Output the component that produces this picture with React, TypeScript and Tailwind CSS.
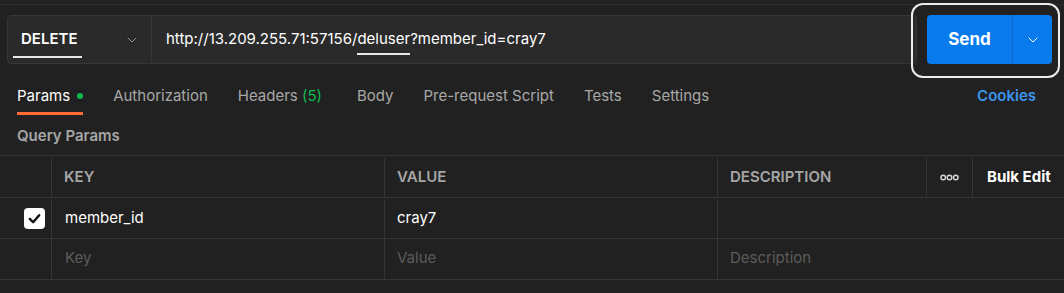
import React from 'react';
import { ChevronDown } from 'lucide-react';

const tabs = [
  { label: 'Params', active: true, dot: true },
  { label: 'Authorization' },
  { label: 'Headers', count: '(5)' },
  { label: 'Body' },
  { label: 'Pre-request Script' },
  { label: 'Tests' },
  { label: 'Settings' },
];

const RequestBar: React.FC = () => (
  <div className="flex items-center pt-[10px] pl-[7px] pr-[12px]">
    <div className="flex h-[49px] flex-1 rounded-[4px] border border-[#363636] bg-[#2a2a2a]">
      <div className="relative flex w-[144px] items-center border-r border-[#363636] pl-[13px]">
        <span className="text-[15px] font-semibold text-white">DELETE</span>
        <ChevronDown className="ml-auto mr-[11px] h-4 w-4 text-[#8f8f8f]" strokeWidth={1.5} />
        <div className="absolute bottom-[5px] left-[5px] h-[2px] w-[69px] bg-[#e6e6e6]" />
      </div>
      <div className="flex items-center pl-[14px] text-[15px] text-white">
        <span>http://13.209.255.71:57156/</span>
        <span className="relative">
          deluser
          <span className="absolute -bottom-[4px] left-0 h-[2px] w-full bg-[#e6e6e6]" />
        </span>
        <span>?member_id=cray7</span>
      </div>
    </div>
    <div className="relative ml-[10px]">
      <div className="pointer-events-none absolute -left-[16px] -right-[8px] -top-[12px] -bottom-[14px] rounded-[12px] border-2 border-[#ececec]" />
      <div className="flex h-[49px] w-[125px] overflow-hidden rounded-[4px] bg-[#097bed]">
        <div className="flex w-[85px] items-center justify-center text-[17px] font-bold text-white">Send</div>
        <div className="flex flex-1 items-center justify-center border-l border-[#0b68c6]">
          <ChevronDown className="h-4 w-4 text-white" strokeWidth={1.5} />
        </div>
      </div>
    </div>
  </div>
);

const Tabs: React.FC = () => (
  <div className="mt-[21px] flex h-[30px] items-start px-[17px]">
    <div className="flex gap-[30px]">
      {tabs.map(t => (
        <div key={t.label} className={`relative flex h-[30px] items-start gap-[7px] ${t.count ? 'pr-[5px]' : ''}`}>
          <span className={`text-[15px] ${t.active ? 'text-white' : 'text-[#a8a8a8]'}`}>
            {t.label}
            {t.count && <span className="text-[#0cbb52]"> {t.count}</span>}
          </span>
          {t.dot && <span className="mt-[8px] h-[6px] w-[6px] rounded-full bg-[#0cbb52]" />}
          {t.active && <div className="absolute bottom-0 left-0 h-[3px] w-full bg-[#ff6c37]" />}
        </div>
      ))}
    </div>
    <span className="ml-auto mr-[11px] text-[15px] font-semibold text-[#3d95ef]">Cookies</span>
  </div>
);

const Checkbox: React.FC = () => (
  <div className="flex h-[21px] w-[21px] items-center justify-center rounded-[4px] bg-white">
    <svg viewBox="0 0 16 16" className="h-[15px] w-[15px]" fill="none" stroke="#111" strokeWidth={2.6} strokeLinecap="round" strokeLinejoin="round">
      <path d="M3 8.5 L6.5 12 L13 4.5" />
    </svg>
  </div>
);

const cell = 'flex items-center border-r border-[#353535]';

const ParamsTable: React.FC = () => (
  <div className="mt-[7px] border-t border-[#353535]">
    <div className="flex h-[42px] border-b border-[#353535] pt-[2px] text-[15px] font-semibold text-[#a6a6a6]">
      <div className={`${cell} w-[52px]`} />
      <div className={`${cell} w-[333px] pl-[12px]`}>KEY</div>
      <div className={`${cell} w-[333px] pl-[12px]`}>VALUE</div>
      <div className={`${cell} w-[209px] pl-[12px]`}>DESCRIPTION</div>
      <div className={`${cell} w-[46px] justify-center`}>
        <svg width="19" height="7" viewBox="0 0 19 7" fill="none" stroke="#d6d6d6" strokeWidth={1.4}>
          <circle cx="3.2" cy="3.5" r="2.3" />
          <circle cx="9.5" cy="3.5" r="2.3" />
          <circle cx="15.8" cy="3.5" r="2.3" />
        </svg>
      </div>
      <div className="flex flex-1 items-center pl-[14px] font-bold text-white">Bulk Edit</div>
    </div>
    <div className="flex h-[41px] border-b border-[#353535] pt-[2px] text-[15px] text-white">
      <div className={`${cell} w-[52px] justify-end pr-[6px]`}>
        <Checkbox />
      </div>
      <div className={`${cell} w-[333px] pl-[13px]`}>member_id</div>
      <div className={`${cell} w-[333px] pl-[12px]`}>cray7</div>
      <div className="flex-1" />
    </div>
    <div className="flex h-[41px] border-b border-[#353535] text-[15px] text-[#5c5c5c]">
      <div className={`${cell} w-[52px]`} />
      <div className={`${cell} w-[333px] pl-[13px]`}>Key</div>
      <div className={`${cell} w-[333px] pl-[12px]`}>Value</div>
      <div className="flex flex-1 items-center pl-[12px]">Description</div>
    </div>
  </div>
);

export default function App() {
  return (
    <div className="h-[293px] w-[1064px] overflow-hidden bg-[#212121] font-['Inter','Liberation_Sans',sans-serif]">
      <div className="h-[4px]" />
      <div className="border-t border-[#2e2e2e]">
        <RequestBar />
        <Tabs />
        <div className="mt-[10px] px-[17px] text-[15px] font-semibold text-[#a6a6a6]">Query Params</div>
        <ParamsTable />
      </div>
    </div>
  );
}
